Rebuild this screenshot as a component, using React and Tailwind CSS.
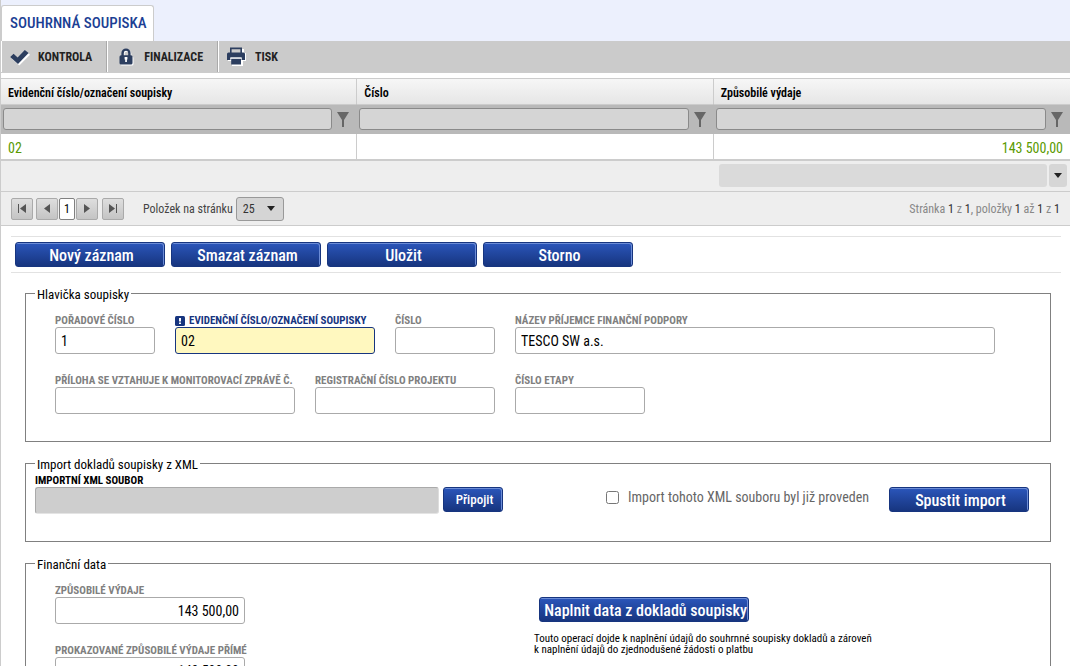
import { useState } from "react";

const COLUMNS = ["Evidenční číslo/označení soupisky", "Číslo", "Způsobilé výdaje"];

function CheckIcon() {
  return (
    <svg width="20" height="18" viewBox="0 0 20 18" aria-hidden="true">
      <path d="M4.5 8.3 8.6 12.2 16.6 4 20 6.8 9.3 17.6 1.8 10.8Z" fill="#fff" />
      <path d="M0.2 9 3.6 5.8 7.6 9.6 14.8 2 18.6 5 8 16Z" fill="#2c3e5f" />
    </svg>
  );
}

function LockIcon() {
  return (
    <svg width="15" height="18" viewBox="0 0 15 18" aria-hidden="true">
      <path d="M4.4 9V5.9a3.4 3.4 0 0 1 6.8 0V9" fill="none" stroke="#fff" strokeWidth="2.4" />
      <rect x="1.5" y="8.6" width="13" height="8.9" rx="1.5" fill="#fff" />
      <path d="M3.6 8V5a3.4 3.4 0 0 1 6.8 0V8" fill="none" stroke="#2c3e5f" strokeWidth="2.4" />
      <rect x="0.5" y="7.3" width="13" height="9.2" rx="1.5" fill="#2c3e5f" />
      <path d="M5.6 9h2.8v2.4H7.9V14H6.2v-2.6h-.6Z" fill="#fff" />
    </svg>
  );
}

function PrintIcon() {
  return (
    <svg width="20" height="19" viewBox="0 0 20 19" aria-hidden="true">
      <path d="M4 2h13v4h2v8h-3v5H5v-5H1V7h3Z" fill="#fff" />
      <path d="M3.8 6V1.4h10.4V6" fill="#cbcbcb" stroke="#2c3e5f" strokeWidth="1.6" />
      <path d="M1.5 5.5h15a1.5 1.5 0 0 1 1.5 1.5v6h-3.4v-2.4H3.4V13H0V7a1.5 1.5 0 0 1 1.5-1.5Z" fill="#2c3e5f" />
      <path d="M3.4 10.6h11.2v1.2H3.4Z" fill="#fff" />
      <rect x="4.2" y="11.8" width="9.8" height="5.7" fill="#2c3e5f" />
    </svg>
  );
}

function FunnelIcon() {
  return (
    <svg width="12" height="15" viewBox="0 0 12 15" aria-hidden="true">
      <path d="M0 0h12L7 8v7H5V8Z" fill="#666" />
    </svg>
  );
}

function CaretIcon() {
  return (
    <svg width="8" height="5" viewBox="0 0 8 5" aria-hidden="true">
      <path d="M0 0h8L4 5Z" fill="#222" />
    </svg>
  );
}

function ToolbarButton({ icon, children }) {
  return (
    <button
      type="button"
      className="flex h-full items-center gap-2 border-r border-l border-r-[#aaa] border-l-white pr-[14px] pl-2 text-[12px] font-bold text-[#222] last:border-r-0"
    >
      <span className="flex w-5 justify-center">{icon}</span>
      {children}
    </button>
  );
}

function PagerButton({ label, path }) {
  return (
    <button
      type="button"
      aria-label={label}
      className="flex h-[22px] w-[22px] items-center justify-center rounded-[2px] border border-[#aaa] bg-linear-to-b from-[#dedede] to-[#c4c4c4]"
    >
      <svg width="8" height="9" viewBox="0 0 8 9" aria-hidden="true">
        <path d={path} fill="#555" />
      </svg>
    </button>
  );
}

function BlueButton({ className, children }) {
  return (
    <button
      type="button"
      className={`h-[25px] rounded-[3px] border border-[#17357f] bg-linear-to-b from-[#2b56bb] to-[#17357f] pt-px pl-[3px] text-center font-medium whitespace-nowrap text-white shadow-[inset_-1px_1px_0_#6c8cd6] ${className}`}
    >
      {children}
    </button>
  );
}

function Field({ id, label, value = "", className, required, numeric }) {
  const [text, setText] = useState(value);
  return (
    <div className={className}>
      <label
        htmlFor={id}
        className={`flex h-[14px] items-center gap-1 pt-[2px] text-[11px] leading-[12px] font-bold whitespace-nowrap ${required ? "text-[#17357f]" : "text-[#808080]"}`}
      >
        {required && (
          <svg width="10" height="10" viewBox="0 0 10 10" aria-hidden="true">
            <rect width="10" height="10" rx="1.5" fill="#17357f" />
            <path d="M4 2h2v3.5H4ZM4 6.5h2v1.5H4Z" fill="#fff" />
          </svg>
        )}
        {label}
      </label>
      <input
        id={id}
        type="text"
        value={text}
        onChange={(event) => setText(event.target.value)}
        className={`block h-[27px] w-full rounded-[3px] border px-[5px] text-[14px] text-black ${required ? "border-[#17357f] bg-[#fff8bf]" : "border-[#aaa] bg-white"} ${numeric ? "text-right" : ""}`}
      />
    </div>
  );
}

function Section({ title, className, children }) {
  return (
    <fieldset className="border border-[#808080] px-[9px]">
      <legend className="px-[2px] pt-[2px] text-[13px] leading-[13px] text-black">{title}</legend>
      <div className={className}>{children}</div>
    </fieldset>
  );
}

export default function App() {
  const [imported, setImported] = useState(false);

  return (
    <div className="h-screen overflow-hidden border-l border-[#ccc] bg-white font-['Roboto_Condensed','Liberation_Sans_Narrow',Roboto,sans-serif]">
      <header className="flex h-[41px] items-end bg-[#ecf0fd]">
        <a href="#soupiska" className="flex h-9 items-center rounded-t-[3px] border border-b-0 border-[#ccc] bg-white pr-[6px] pl-2 text-[15px] font-medium text-[#1c3f94]">
          SOUHRNNÁ SOUPISKA
        </a>
      </header>

      <nav className="flex h-8 border-b border-[#ccc] bg-[#cbcbcb]">
        <ToolbarButton icon={<CheckIcon />}>KONTROLA</ToolbarButton>
        <ToolbarButton icon={<LockIcon />}>FINALIZACE</ToolbarButton>
        <ToolbarButton icon={<PrintIcon />}>TISK</ToolbarButton>
      </nav>

      <table className="mt-[5px] w-full table-fixed border-separate border-spacing-0">
        <thead>
          <tr className="h-[26px] bg-linear-to-b from-[#f7f7f7] to-[#e6e6e6]">
            {COLUMNS.map((name) => (
              <th key={name} className="border-t border-r border-[#ccc] px-[7px] pt-[2px] text-left text-[12px] font-semibold text-black last:border-r-0">
                {name}
              </th>
            ))}
          </tr>
          <tr className="h-[30px] bg-[#b9b9b9]">
            {COLUMNS.map((name) => (
              <td key={name} className="border-t border-r border-t-[#ccc] border-r-[#b9b9b9] px-[2px] pb-[2px] last:border-r-0">
                <div className="flex items-center">
                  <input type="text" aria-label={`Filtr: ${name}`} className="h-[22px] min-w-0 flex-1 rounded-[3px] border border-[#8a8a8a] bg-[#d5d5d5] px-1 text-[13px]" />
                  <button type="button" aria-label={`Filtrovat ${name}`} className="flex w-[22px] justify-center pt-px">
                    <FunnelIcon />
                  </button>
                </div>
              </td>
            ))}
          </tr>
        </thead>
        <tbody>
          <tr className="h-[27px] text-[14px] text-[#5a9a00]">
            <td className="border-r border-b-2 border-[#ccc] px-[7px] pt-[3px]">02</td>
            <td className="border-r border-b-2 border-[#ccc] px-[7px]"></td>
            <td className="border-b-2 border-[#ccc] px-[7px] pt-[3px] text-right">143 500,00</td>
          </tr>
        </tbody>
        <tfoot>
          <tr className="h-[31px] bg-[#eee]">
            <td colSpan={2} className="border-b border-[#ccc]"></td>
            <td className="border-b border-[#ccc] pr-[3px] pb-px pl-[5px]">
              <div className="flex gap-[2px]">
                <input type="text" disabled aria-label="Souhrn" className="h-[23px] min-w-0 flex-1 rounded-[3px] bg-[#dadada]" />
                <button type="button" aria-label="Vybrat souhrn" className="flex h-[23px] w-[18px] items-center justify-center rounded-[3px] bg-[#d6d6d6]">
                  <CaretIcon />
                </button>
              </div>
            </td>
          </tr>
        </tfoot>
      </table>

      <div className="flex h-[34px] items-center border-b border-[#ccc] bg-[#eee] px-[10px] text-[12px] text-[#444]">
        <div className="flex items-center gap-[3px]">
          <PagerButton label="První stránka" path="M0 0h1v9H0ZM8 0v9L2 4.5Z" />
          <div className="flex items-center gap-px pr-px">
            <PagerButton label="Předchozí stránka" path="M7 0v9L1 4.5Z" />
            <a href="#strana-1" className="flex h-[22px] w-4 items-center justify-center rounded-[2px] border border-[#808080] bg-white text-black">
              1
            </a>
            <PagerButton label="Další stránka" path="M1 0v9L7 4.5Z" />
          </div>
          <PagerButton label="Poslední stránka" path="M7 0h1v9H7ZM0 0v9L6 4.5Z" />
        </div>
        <label htmlFor="page-size" className="mr-[3px] ml-[19px]">
          Položek na stránku
        </label>
        <div className="relative">
          <select id="page-size" defaultValue="25" className="block h-6 w-12 appearance-none rounded-[3px] border border-[#999] bg-[#d5d5d5] px-[6px] text-[12px] text-[#333]">
            <option>10</option>
            <option>25</option>
            <option>50</option>
          </select>
          <span className="pointer-events-none absolute top-[9px] right-[9px]">
            <CaretIcon />
          </span>
        </div>
        <p className="ml-auto text-[#888]">
          Stránka <span className="text-[#333]">1</span> z <span className="text-[#333]">1</span>, položky <span className="text-[#333]">1</span> až{" "}
          <span className="text-[#333]">1</span> z <span className="text-[#333]">1</span>
        </p>
      </div>

      <div className="mt-[10px] mr-[9px] ml-[10px] flex gap-[6px] border-y border-[#e2e2e2] px-1 py-[5px] text-[16px]">
        <BlueButton className="w-[150px]">Nový záznam</BlueButton>
        <BlueButton className="w-[150px]">Smazat záznam</BlueButton>
        <BlueButton className="w-[150px]">Uložit</BlueButton>
        <BlueButton className="w-[150px]">Storno</BlueButton>
      </div>

      <form className="mt-[13px] mr-[19px] ml-6 flex flex-col gap-[14px]">
        <Section title="Hlavička soupisky" className="px-5 pt-3 pb-[27px]">
          <div className="flex gap-5">
            <Field id="order" label="POŘADOVÉ ČÍSLO" value="1" className="w-[100px]" />
            <Field id="evidence" label="EVIDENČNÍ ČÍSLO/OZNAČENÍ SOUPISKY" value="02" className="w-[200px]" required />
            <Field id="number" label="ČÍSLO" className="w-[100px]" />
            <Field id="recipient" label="NÁZEV PŘÍJEMCE FINANČNÍ PODPORY" value="TESCO SW a.s." className="w-[480px]" />
          </div>
          <div className="mt-[19px] flex gap-5">
            <Field id="report" label="PŘÍLOHA SE VZTAHUJE K MONITOROVACÍ ZPRÁVĚ Č." className="w-[240px]" />
            <Field id="project" label="REGISTRAČNÍ ČÍSLO PROJEKTU" className="w-[180px]" />
            <Field id="stage" label="ČÍSLO ETAPY" className="w-[130px]" />
          </div>
        </Section>

        <Section title="Import dokladů soupisky z XML" className="pt-[2px] pr-3 pb-[27px]">
          <label htmlFor="xml-file" className="block h-[14px] pt-[2px] text-[11px] leading-[12px] font-bold text-black">
            IMPORTNÍ XML SOUBOR
          </label>
          <div className="flex items-start">
            <input
              id="xml-file"
              type="text"
              readOnly
              className="h-[27px] w-[404px] rounded-[3px] border border-t-[#aaa] border-r-[#ddd] border-b-[#e4e4e4] border-l-[#aaa] bg-[#cecece] px-[5px]"
            />
            <BlueButton className="ml-1 w-[60px] text-[13px]">Připojit</BlueButton>
            <div className="ml-auto flex items-start gap-5">
              <label className="flex items-center gap-[9px] text-[14px] leading-[20px] text-[#666]">
                <input
                  type="checkbox"
                  checked={imported}
                  onChange={(event) => setImported(event.target.checked)}
                  className="h-[13px] w-[13px]"
                />
                Import tohoto XML souboru byl již proveden
              </label>
              <BlueButton className="w-[140px] text-[16px]">Spustit import</BlueButton>
            </div>
          </div>
        </Section>

        <Section title="Finanční data" className="px-5 pt-3 pb-[27px]">
          <div className="flex gap-[289px]">
            <div className="flex w-[190px] shrink-0 flex-col gap-[19px]">
              <Field id="eligible" label="ZPŮSOBILÉ VÝDAJE" value="143 500,00" numeric />
              <Field id="direct" label="PROKAZOVANÉ ZPŮSOBILÉ VÝDAJE PŘÍMÉ" value="143 500,00" numeric />
            </div>
            <div className="pt-[14px]">
              <BlueButton className="ml-[5px] w-[210px] text-[16px]">Naplnit data z dokladů soupisky</BlueButton>
              <p className="mt-[10px] text-[11px] leading-[11px] text-black">
                Touto operací dojde k naplnění údajů do souhrnné soupisky dokladů a zároveň
                <br />k naplnění údajů do zjednodušené žádosti o platbu
              </p>
            </div>
          </div>
        </Section>
      </form>
    </div>
  );
}
